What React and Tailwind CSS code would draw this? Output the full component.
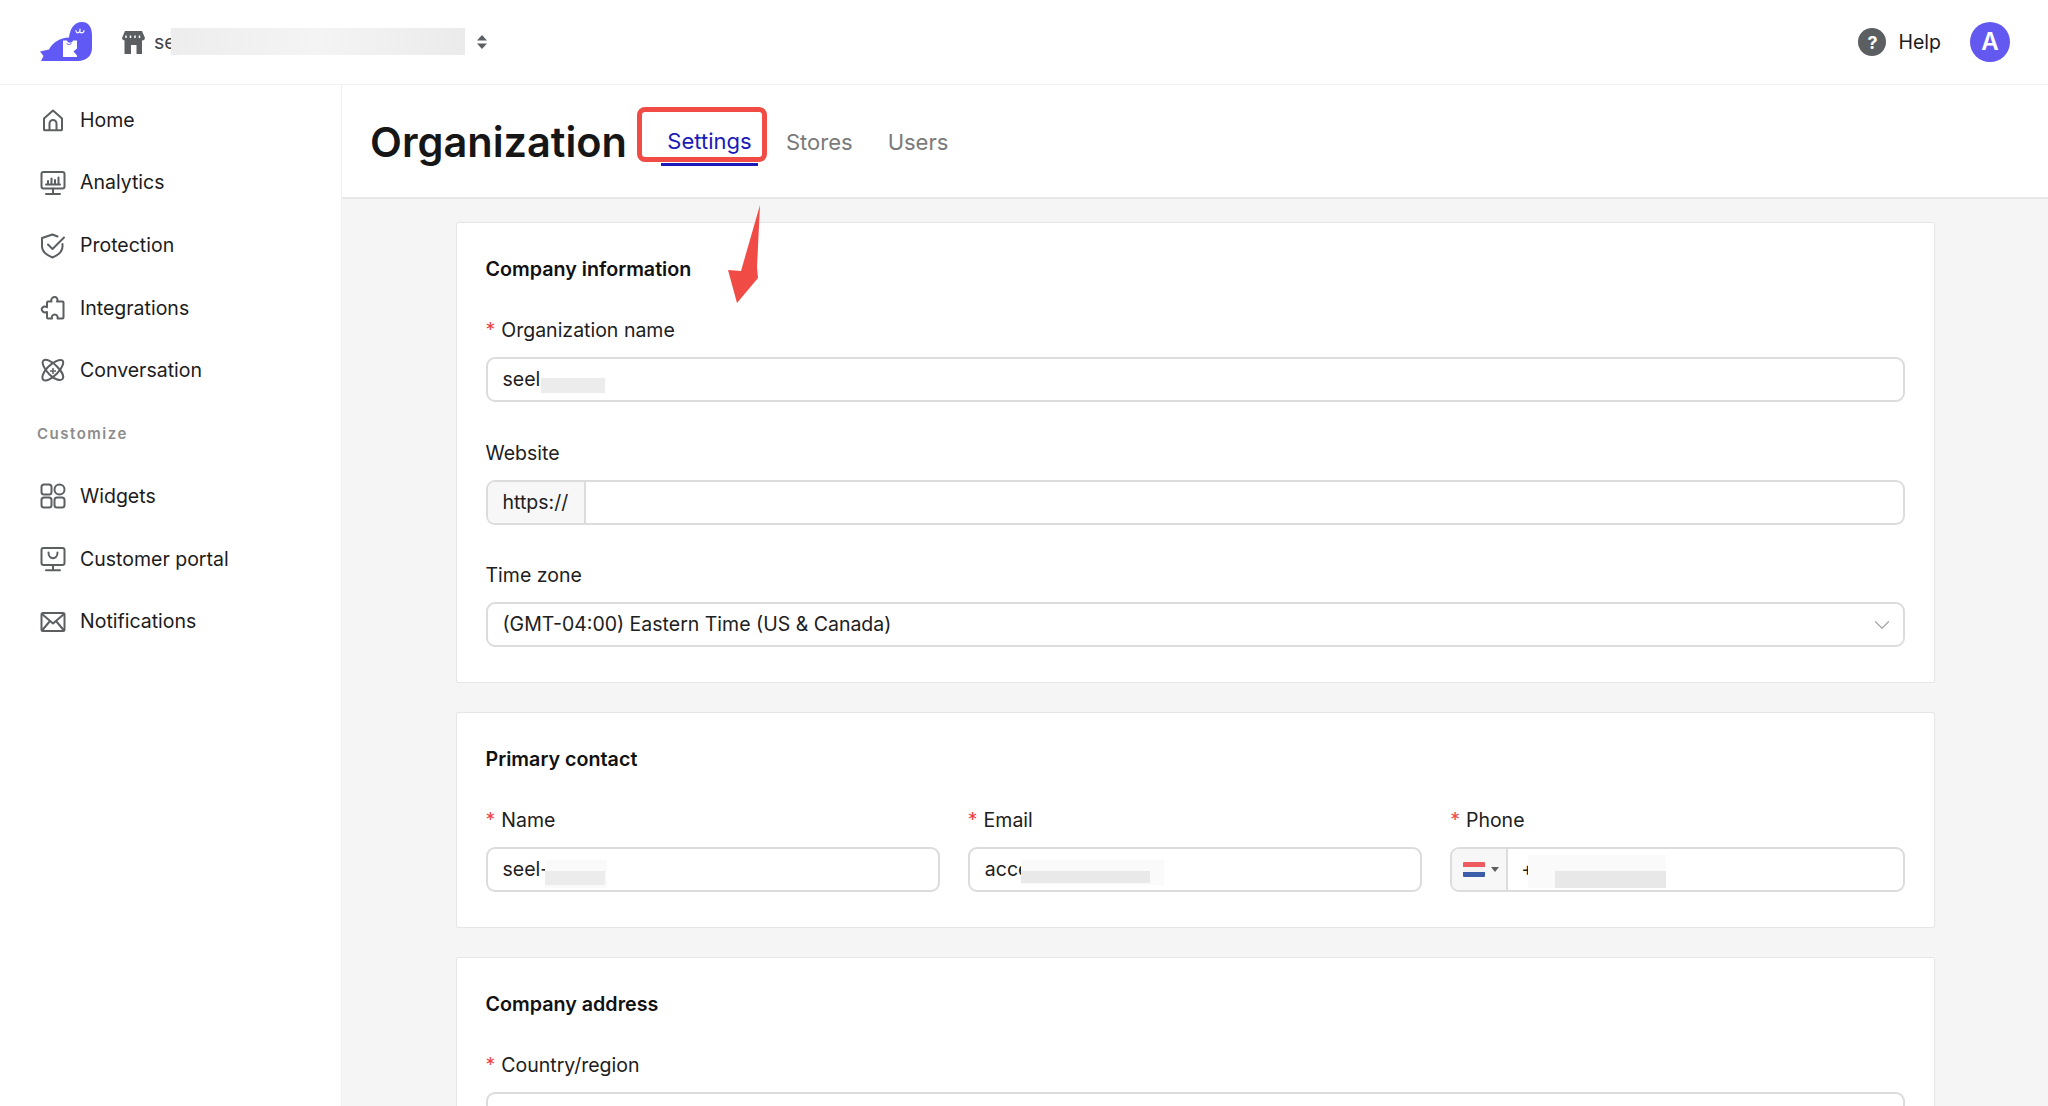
import { ChevronDown } from 'lucide-react'

const ICON = 'w-[26px] h-[26px] shrink-0 text-[#5c5f62]'

const HomeIcon = () => (
  <svg viewBox="0 0 26 26" fill="none" stroke="currentColor" strokeWidth="2" strokeLinejoin="round" className={ICON}>
    <path d="M4 11.500 13 3.500l9 8V22.500a.8.8 0 0 1-.8.8H4.800a.8.8 0 0 1-.8-.8z" />
    <path d="M9.500 23v-6.500a3.500 3.500 0 0 1 7 0V23" />
  </svg>
)

const AnalyticsIcon = () => (
  <svg viewBox="0 0 26 26" fill="none" stroke="currentColor" strokeWidth="2" strokeLinecap="round" strokeLinejoin="round" className={ICON}>
    <rect x="1.500" y="2" width="23" height="16.500" rx="2" />
    <path d="M13 18.500v5M6 24h14M6 14.500h14M8 14v-3M11.500 14V8.500M15 14v-4M18.500 14V7.500" />
  </svg>
)

const ProtectionIcon = () => (
  <svg viewBox="0 0 26 26" fill="none" stroke="currentColor" strokeWidth="2" strokeLinecap="round" strokeLinejoin="round" className={ICON}>
    <path d="M17.500 3.500 12.500 1.500 2 5v8.500c0 5 4.500 8.500 10.500 11 6-2.500 10-6 10-11V11" />
    <path d="m8 11.500 4.500 4.500L24 4.500" />
  </svg>
)

const PuzzleIcon = () => (
  <svg viewBox="0 0 26 26" fill="none" stroke="currentColor" strokeWidth="2" strokeLinejoin="round" className={ICON}>
    <path d="M8 6.500h3.500a3.400 3.400 0 0 1 1-3.800c1.500-1.200 3.700-.8 4.500.6.600 1 .6 2.200 0 3.200h5.500a1 1 0 0 1 1 1v15a1 1 0 0 1-1 1h-5c.5-2-.5-4-2.700-4s-3.500 2-2.800 4H8a1 1 0 0 1-1-1v-5.500c-2 .8-4 .2-4.800-1.200-.7-1.200-.6-2.400.3-3.300.9-.9 2.900-1.200 4.500-.3V7.500a1 1 0 0 1 1-1z" />
  </svg>
)

const ConversationIcon = () => (
  <svg viewBox="0 0 26 26" fill="none" stroke="currentColor" strokeWidth="2" strokeLinejoin="round" className={ICON}>
    <path d="M3.500 2.500c2.500-2 8 .5 13 5.500s8 10.500 6 13-8 .5-13-4.500-8.500-12-6-14z" />
    <path d="M22.500 2.500c2 2-.5 8-5.500 13s-11 8.500-13.500 6.500-.5-8 4.500-13 12-8.500 14.500-6.500z" />
    <path d="M13 10v6M10 13h6" strokeWidth="1.500" />
  </svg>
)

const WidgetsIcon = () => (
  <svg viewBox="0 0 26 26" fill="none" stroke="currentColor" strokeWidth="2" className={ICON}>
    <rect x="1.500" y="1.500" width="10" height="10" rx="2.500" />
    <circle cx="19.500" cy="6.500" r="5" />
    <rect x="1.500" y="14.500" width="10" height="10" rx="2.500" />
    <rect x="14.500" y="14.500" width="10" height="10" rx="2.500" />
  </svg>
)

const PortalIcon = () => (
  <svg viewBox="0 0 26 26" fill="none" stroke="currentColor" strokeWidth="2" strokeLinecap="round" strokeLinejoin="round" className={ICON}>
    <rect x="1.500" y="2" width="23" height="17" rx="2" />
    <path d="M13 19v5M6 24.200h14M8.500 6.500c0 7.500 9 7.500 9 0" />
  </svg>
)

const MailIcon = () => (
  <svg viewBox="0 0 26 26" fill="none" stroke="currentColor" strokeWidth="2" strokeLinejoin="round" className={ICON}>
    <rect x="1.500" y="4" width="23" height="18" rx="1.500" />
    <path d="m2 5 11 9.500L24 5M2 21.500l8-9.500M24 21.500l-8-9.500" />
  </svg>
)

const NAV = [
  ['Home', HomeIcon],
  ['Analytics', AnalyticsIcon],
  ['Protection', ProtectionIcon],
  ['Integrations', PuzzleIcon],
  ['Conversation', ConversationIcon],
]

const NAV2 = [
  ['Widgets', WidgetsIcon],
  ['Customer portal', PortalIcon],
  ['Notifications', MailIcon],
]

function NavItem({ label, Icon }) {
  return (
    <div className="flex items-center h-[62.7px] pl-[40px] gap-[14px] text-[19.500px] text-[#1c1c1c]">
      <Icon />
      <span>{label}</span>
    </div>
  )
}

function Logo() {
  return (
    <svg viewBox="0 0 54 40" className="w-[54px] h-[40px] shrink-0">
      <path d="M0 29.500 9 27.500C13 20 20 16 29 15.500 30 7 34 0 42 0c7 0 10 6 10 13v13c0 8-6 13-14 13H1l2.500-5z" fill="#6059f5" />
      <path d="M23 18.500h4c.5 3 5.500 3 6 0h4v8l-3.500 3 3.500 4V35H23z" fill="#fff" />
      <path d="M26.500 21c1 2 4 2 5 0" stroke="#6059f5" strokeWidth="1" fill="none" />
      <path d="M36 9c.5 2.500 2.500 2.500 3.500.5 1 2 3.500 2 4.500-.5M36 8.500v.5M44 8.500V9M40 7v2" stroke="#fff" strokeWidth="1.200" fill="none" strokeLinecap="round" />
    </svg>
  )
}

function StoreIcon() {
  return (
    <svg viewBox="0 0 23 23" className="w-[23px] h-[23px] shrink-0" fill="#5c5f62">
      <path d="M3 0h17l3 7a2.900 2.900 0 0 1-3 2.600V23h-5.500v-9h-5.500v9H2.500V9.600A2.900 2.900 0 0 1 0 7z" />
      <path d="M4 4.500v2.500M8.500 4.500v2.500M13 4.500v2.500M17.500 4.500v2.500" stroke="#fff" strokeWidth="1.500" />
    </svg>
  )
}

function Blur({ className }) {
  return <div className={`absolute ${className}`} />
}

function Label({ children, required }) {
  return (
    <div className="h-[24px] leading-[24px] text-[19.500px] text-[#202020] mb-[15px]">
      {required && <span className="text-[#ef4444] mr-[6px]">*</span>}
      {children}
    </div>
  )
}

function Box({ children, className = '' }) {
  return (
    <div className={`relative flex items-center h-[45px] rounded-[9px] border-2 border-[#dcdcdc] bg-white text-[19.500px] text-[#202020] overflow-hidden ${className}`}>
      {children}
    </div>
  )
}

function Card({ title, children, className = '' }) {
  return (
    <section className={`bg-white border border-[#e6e6e6] rounded-[2px] px-[29px] pt-[34px] ${className}`}>
      <h2 className="h-[24px] leading-[24px] text-[19.700px] font-semibold text-[#111] mb-[37px]">{title}</h2>
      {children}
    </section>
  )
}

export default function App() {
  return (
    <div className="h-[1106px] overflow-hidden flex flex-col bg-white font-['Inter',sans-serif]">
      <header className="h-[85px] shrink-0 flex items-center border-b border-[#f2f2f2] pr-[38px]">
        <div className="ml-[40px]"><Logo /></div>
        <div className="ml-[28px]"><StoreIcon /></div>
        <span className="relative ml-[9px] w-[312px] text-[19.500px] leading-[24px] text-[#444]">
          se
          <div className="absolute left-[17px] top-[-2px] w-[294px] h-[27px] bg-gradient-to-r from-[#ededed] via-[#f4f4f4] to-[#ebebeb]" />
        </span>
        <svg viewBox="0 0 10 14" className="w-[10px] h-[14px] ml-[11px]" fill="#5c5f62">
          <path d="M5 0 10 5.500H0zM5 14 0 8.500h10z" />
        </svg>
        <div className="ml-auto flex items-center">
          <div className="w-[28px] h-[28px] rounded-full bg-[#5c5f62] text-white flex items-center justify-center text-[18px] font-bold">?</div>
          <span className="ml-[12px] mt-[1px] text-[19.500px] text-[#1c1c1c]">Help</span>
          <div className="ml-[29px] w-[40px] h-[40px] rounded-full bg-[#6359f0] text-white flex items-center justify-center text-[24px] font-semibold">A</div>
        </div>
      </header>

      <div className="flex flex-1 min-h-0">
        <aside className="w-[342px] shrink-0 pt-[4px] border-r border-[#f0f0f0]">
          {NAV.map(([label, Icon]) => <NavItem key={label} label={label} Icon={Icon} />)}
          <div className="flex items-center h-[62.7px] pl-[37px] text-[15px] font-semibold tracking-[1.500px] text-[#8c8c8c]">Customize</div>
          {NAV2.map(([label, Icon]) => <NavItem key={label} label={label} Icon={Icon} />)}
        </aside>

        <main className="flex-1 min-w-0 bg-[#f5f5f5] flex flex-col">
          <div className="relative h-[114px] shrink-0 bg-white border-b-2 border-[#e8e8e8] flex items-start pl-[28px]">
            <h1 className="mt-[32px] text-[41.500px] leading-[50px] font-semibold text-[#161616]">Organization</h1>
            <div className="flex ml-[34px] mt-[40px] text-[22px] leading-[32px] text-[#7a7a7a]">
              <div className="relative w-[97px] text-center h-[41px] text-[#1a1ab8] border-b-[3px] border-[#1a1ab8]">Settings</div>
              <span className="ml-[28px] mt-[1px]">Stores</span>
              <span className="ml-[35px] mt-[1px]">Users</span>
            </div>
            {/* annotation */}
            <div className="absolute left-[295px] top-[22px] w-[130px] h-[55px] rounded-[8px] border-[5px] border-[#f04b45]" />
            <svg viewBox="0 0 32 98" className="absolute left-[386px] top-[120px] w-[32px] h-[98px] z-10">
              <path d="M32 0 29 62 30 73 9 98 0 65 13 66z" fill="#f04b45" />
            </svg>
          </div>

          <div className="w-[1479px] mx-auto pt-[23px]">
            <Card title="Company information" className="pb-[35px]">
              <Label required>Organization name</Label>
              <Box className="pl-[15px] mb-[39px]">
                seel
                <Blur className="left-[53px] top-[19px] w-[64px] h-[15px] bg-[#ececec]" />
              </Box>
              <Label>Website</Label>
              <Box className="mb-[38px]">
                <div className="h-full w-[98px] shrink-0 bg-[#f7f7f7] border-r-2 border-[#dcdcdc] flex items-center pl-[15px]">https://</div>
              </Box>
              <Label>Time zone</Label>
              <Box className="pl-[15px] justify-between pr-[8px]">
                <span>(GMT-04:00) Eastern Time (US &amp; Canada)</span>
                <ChevronDown className="w-[26px] h-[26px] text-[#a8a8a8]" strokeWidth={1.2} />
              </Box>
            </Card>

            <Card title="Primary contact" className="mt-[29px] pb-[35px]">
              <div className="grid grid-cols-3 gap-[28px]">
                <div>
                  <Label required>Name</Label>
                  <Box className="pl-[15px]">
                    seel-
                    <Blur className="left-[57px] top-[11px] w-[62px] h-[28px] bg-[#fafafa]" />
                    <Blur className="left-[57px] top-[22px] w-[60px] h-[14px] bg-[#ececec]" />
                  </Box>
                </div>
                <div>
                  <Label required>Email</Label>
                  <Box className="pl-[15px]">
                    acce
                    <Blur className="left-[51px] top-[11px] w-[143px] h-[25px] bg-[#fafafa]" />
                    <Blur className="left-[51px] top-[22px] w-[129px] h-[12px] bg-[#e9e9e9]" />
                  </Box>
                </div>
                <div>
                  <Label required>Phone</Label>
                  <Box>
                    <div className="h-full w-[56px] shrink-0 bg-[#f7f7f7] border-r-2 border-[#dcdcdc] flex items-center pl-[11px] gap-[6px]">
                      <div className="w-[22px] h-[15px] flex flex-col overflow-hidden rounded-[1px]">
                        <div className="flex-1 bg-[#ee5a5f]" />
                        <div className="flex-1 bg-[#f3f3f6]" />
                        <div className="flex-1 bg-[#3b5ca8]" />
                      </div>
                      <svg viewBox="0 0 8 5" className="w-[8px] h-[5px]" fill="#5c5f62"><path d="M0 0h8L4 5z" /></svg>
                    </div>
                    <span className="ml-[13px]">+</span>
                    <Blur className="left-[76px] top-[6px] w-[138px] h-[33px] bg-[#fafafa]" />
                    <Blur className="left-[103px] top-[22px] w-[111px] h-[17px] bg-[#e8e8e8]" />
                  </Box>
                </div>
              </div>
            </Card>

            <Card title="Company address" className="mt-[29px]">
              <Label required>Country/region</Label>
              <Box />
            </Card>
          </div>
        </main>
      </div>
    </div>
  )
}
